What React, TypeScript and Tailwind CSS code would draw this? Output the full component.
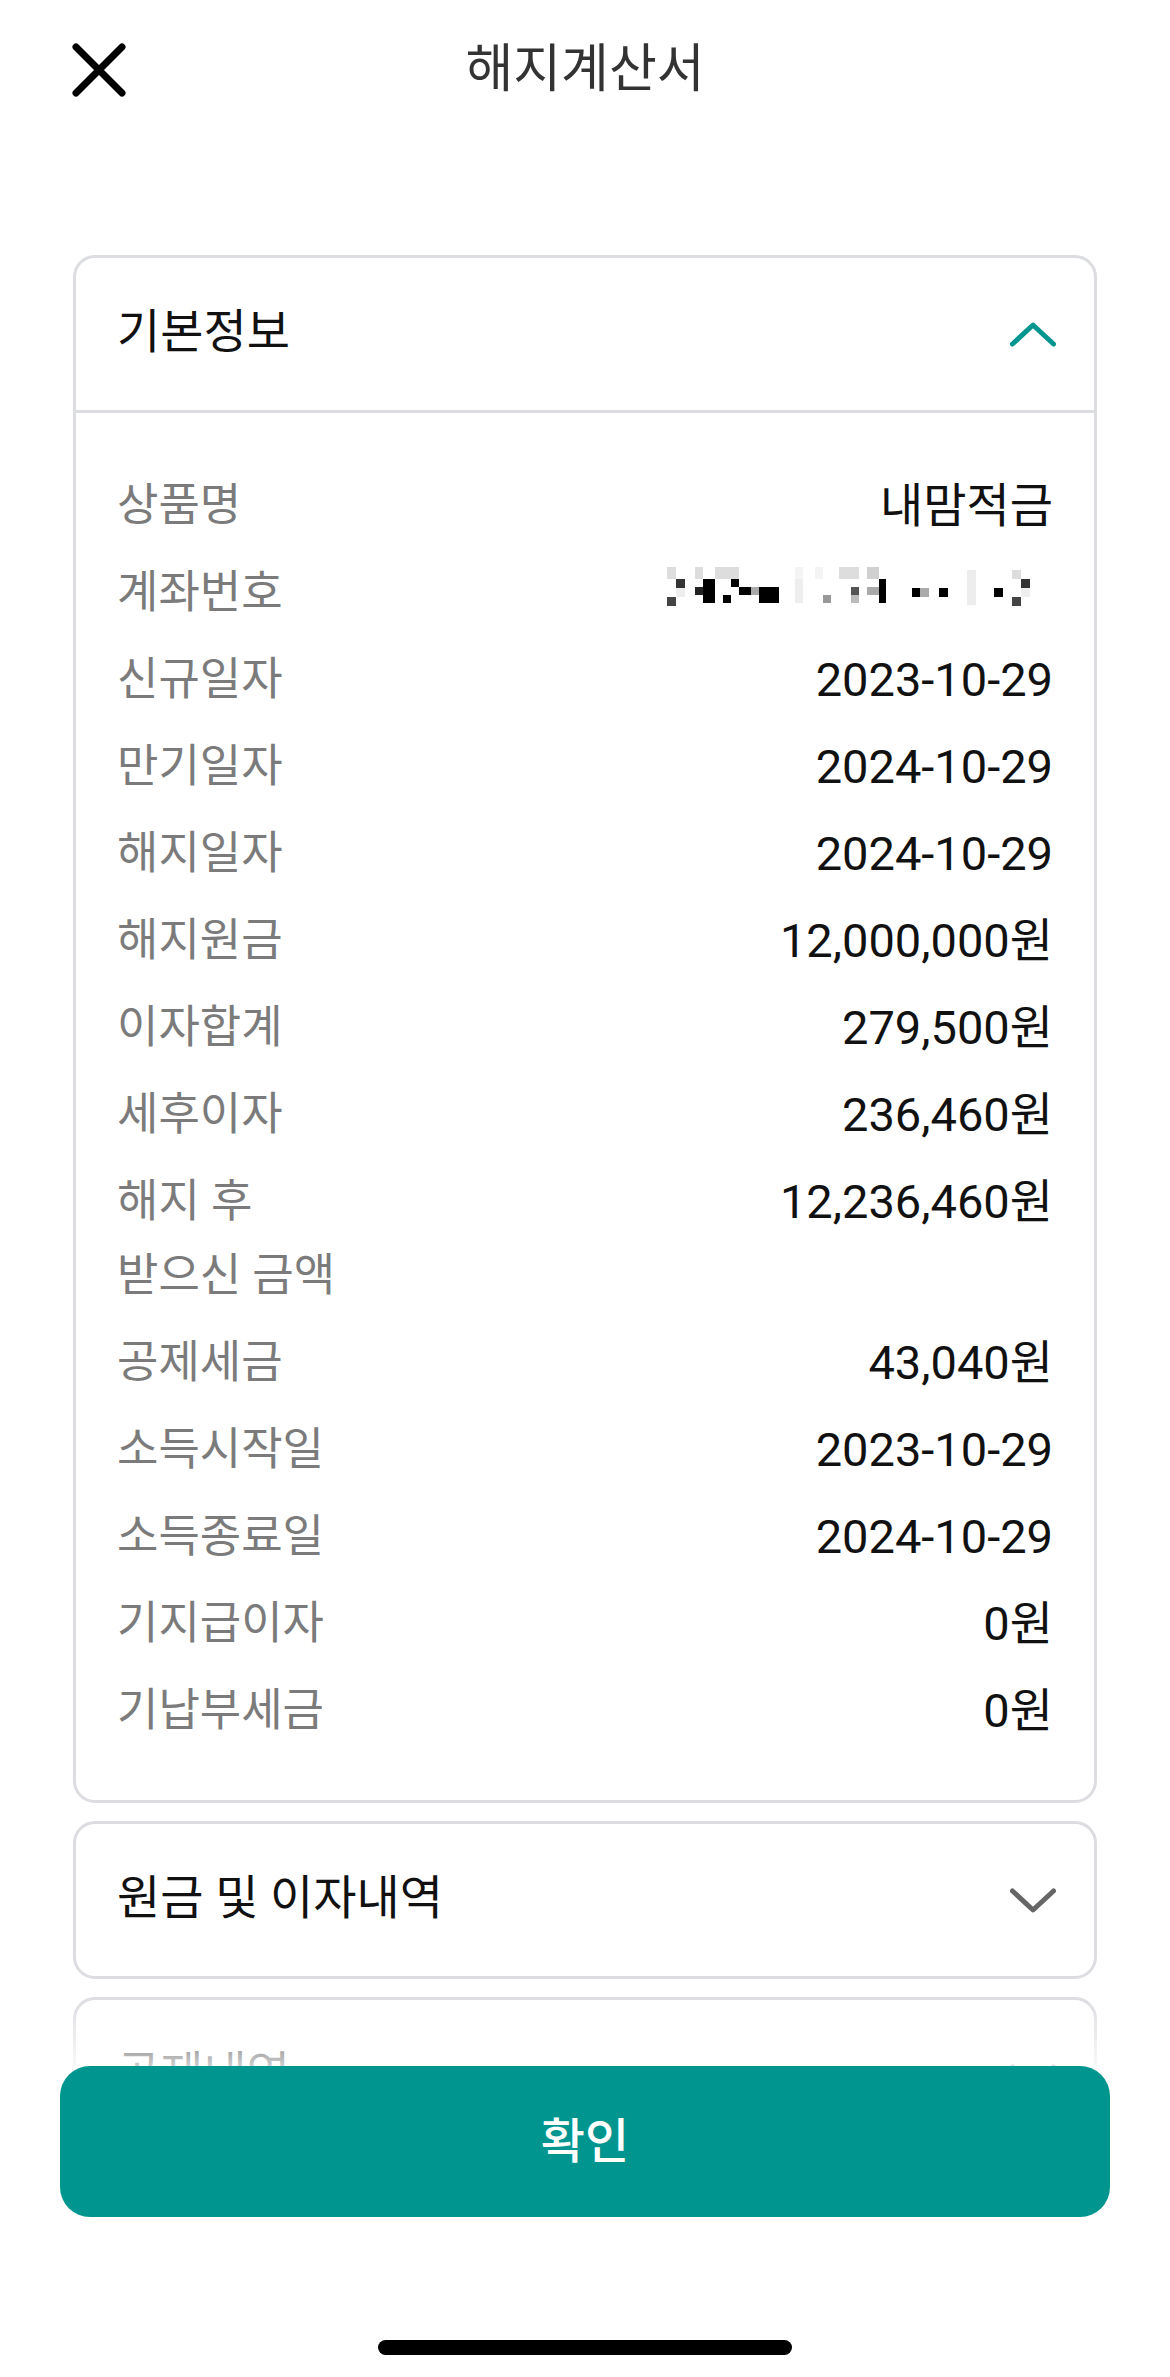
import React from 'react';

interface InfoRow {
  label: string;
  value: string | null;
}

const rows: InfoRow[] = [
  { label: '상품명', value: '내맘적금' },
  { label: '계좌번호', value: null },
  { label: '신규일자', value: '2023-10-29' },
  { label: '만기일자', value: '2024-10-29' },
  { label: '해지일자', value: '2024-10-29' },
  { label: '해지원금', value: '12,000,000원' },
  { label: '이자합계', value: '279,500원' },
  { label: '세후이자', value: '236,460원' },
  { label: '해지 후\n받으신 금액', value: '12,236,460원' },
  { label: '공제세금', value: '43,040원' },
  { label: '소득시작일', value: '2023-10-29' },
  { label: '소득종료일', value: '2024-10-29' },
  { label: '기지급이자', value: '0원' },
  { label: '기납부세금', value: '0원' },
];

// masked account number (pixel mosaic)
const mosaic: [number, number, number, number, string][] = [
  [0, 0, 9, 12, '#ddd'],
  [28, 0, 8, 12, '#ddd'],
  [48, 0, 24, 12, '#ddd'],
  [128, 0, 8, 12, '#f4f4f4'],
  [148, 0, 8, 12, '#f4f4f4'],
  [172, 0, 20, 12, '#ddd'],
  [200, 0, 12, 12, '#d0d0d0'],
  [300, 3, 9, 35, '#ededed'],
  [345, 3, 9, 9, '#ddd'],
  [9, 12, 9, 9, '#333'],
  [9, 21, 9, 9, '#eee'],
  [28, 20, 8, 8, '#222'],
  [36, 12, 12, 24, '#000'],
  [64, 12, 8, 8, '#000'],
  [72, 20, 12, 8, '#000'],
  [84, 20, 8, 8, '#aaa'],
  [92, 20, 20, 16, '#000'],
  [128, 12, 8, 24, '#eee'],
  [184, 20, 8, 8, '#555'],
  [200, 20, 12, 8, '#aaa'],
  [212, 12, 7, 24, '#000'],
  [245, 21, 8, 9, '#000'],
  [253, 21, 9, 9, '#aaa'],
  [272, 21, 9, 9, '#000'],
  [327, 21, 9, 9, '#000'],
  [354, 12, 9, 9, '#333'],
  [354, 21, 9, 9, '#eee'],
  [0, 30, 9, 9, '#444'],
  [56, 28, 8, 8, '#000'],
  [156, 28, 8, 8, '#999'],
  [184, 28, 8, 8, '#bbb'],
  [345, 30, 9, 9, '#444'],
];

function Chevron({ up, color }: { up?: boolean; color: string }) {
  return (
    <svg width="46" height="25" viewBox="0 0 46 25" fill="none">
      <polyline
        points={up ? '2.5,22 23,3 43.5,22' : '2.5,3 23,22 43.5,3'}
        stroke={color}
        strokeWidth="5"
        strokeLinecap="round"
        strokeLinejoin="round"
      />
    </svg>
  );
}

function AccordionHeader({ title, open }: { title: string; open?: boolean }) {
  return (
    <div className="flex h-[152px] items-center justify-between pl-[41px] pr-[38px]">
      <span className="mb-[4px] text-[47px] text-[#111]">{title}</span>
      <Chevron up={open} color={open ? '#00968f' : '#666'} />
    </div>
  );
}

export default function App() {
  return (
    <div className="relative h-[2377px] overflow-hidden bg-white font-[family-name:Roboto,'Noto_Sans_CJK_KR',sans-serif]">
      {/* top bar */}
      <div className="flex h-[140px] items-center px-[72px]">
        <svg width="54" height="54" viewBox="0 0 54 54" fill="none">
          <path d="M4 4 L50 50 M50 4 L4 50" stroke="#000" strokeWidth="7" strokeLinecap="round" />
        </svg>
        <div className="flex-1 text-center text-[52px] text-[#333]">해지계산서</div>
        <div className="w-[54px]" />
      </div>

      <div className="mx-[73px] mt-[115px] flex flex-col gap-[18px]">
        {/* 기본정보 */}
        <div className="rounded-[22px] border-[3px] border-[#dcdde1]">
          <AccordionHeader title="기본정보" open />
          <div className="border-t-[3px] border-[#dcdde1] pb-[52px] pl-[41px] pr-[41px] pt-[56px]">
            <div className="flex flex-col gap-[13px]">
              {rows.map((row) => (
                <div key={row.label} className="flex items-start justify-between">
                  <span className="whitespace-pre-line text-[45px] leading-[74px] text-[#7b7b7b]">
                    {row.label}
                  </span>
                  {row.value ? (
                    <span className="text-[47px] leading-[74px] text-[#111]">{row.value}</span>
                  ) : (
                    <div className="flex h-[74px] items-center">
                      <svg width="363" height="39" className="mb-[13px] mr-[23px]">
                        {mosaic.map(([x, y, w, h, c], i) => (
                          <rect key={i} x={x} y={y} width={w} height={h} fill={c} />
                        ))}
                      </svg>
                    </div>
                  )}
                </div>
              ))}
            </div>
          </div>
        </div>

        {/* 원금 및 이자내역 */}
        <div className="rounded-[22px] border-[3px] border-[#dcdde1]">
          <AccordionHeader title="원금 및 이자내역" />
        </div>

        {/* 공제내역 */}
        <div className="rounded-[22px] border-[3px] border-[#dcdde1]">
          <AccordionHeader title="공제내역" />
        </div>
      </div>

      {/* bottom action area */}
      <div className="absolute bottom-0 left-0 right-0">
        <div className="h-[70px] bg-gradient-to-b from-white/0 to-white/80" />
        <div className="flex flex-col items-center bg-white">
          <button className="h-[151px] w-[1050px] rounded-[30px] bg-[#00968f] text-[48px] font-medium text-white">
            확인
          </button>
          <div className="mt-[123px] h-[15px] w-[414px] rounded-full bg-black" />
          <div className="h-[22px]" />
        </div>
      </div>
    </div>
  );
}
